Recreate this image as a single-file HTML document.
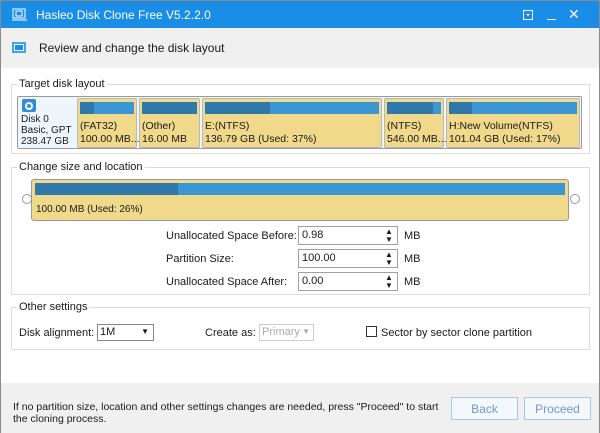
<!DOCTYPE html>
<html><head><style>
*{margin:0;padding:0;box-sizing:border-box}
body{width:600px;height:433px;font-family:"Liberation Sans",sans-serif;font-size:11px;color:#1a1a1a;position:relative;overflow:hidden;background:#fff;border:1px solid #8a8a8a}
.a{position:absolute}
.title{left:0;top:0;width:598px;height:27px;background:#1a8de6;color:#fff;font-size:12px}
.hdr{left:0;top:27px;width:598px;height:40px;background:#f0f0f0}
.ftr{left:0;top:382px;width:598px;height:50px;background:#f0f0f0}
.frame{border:1px solid #dcdcdc}
.leg{background:#fff;padding:0 2px;font-size:11px}
.part{background:#f0d98a;border:1px solid #b8b8b8;border-radius:2px}
.bar{background:#3b97d3}
.bar i{display:block;height:100%;background:#2f78aa}
.inp{border:1px solid #a0a0a0;background:#fff;height:19px;width:100px;padding:0 3px;line-height:17px}
.btn{border:1px solid #a8c8e8;background:#f5f8fb;color:#6a9ccc;text-align:center;font-size:12px;line-height:22px}
</style></head><body>
<div class="a title">
<svg class="a" style="left:11px;top:7px" width="16" height="13"><rect x="1" y="1" width="12" height="9" fill="none" stroke="#fff"/><rect x="4" y="3" width="6" height="5" fill="none" stroke="#fff"/><line x1="0" y1="12" x2="15" y2="12" stroke="#fff"/></svg>
<div class="a" style="left:35px;top:7px">Hasleo Disk Clone Free V5.2.2.0</div>
<svg class="a" style="left:522px;top:9px" width="10" height="10"><rect x="0.5" y="0.5" width="9" height="9" fill="none" stroke="#fff"/><path d="M3 4h4l-2 2z" fill="#fff"/></svg>
<div class="a" style="left:546px;top:18px;width:9px;height:1px;background:#fff"></div>
<div class="a" style="left:567px;top:5px;font-size:14px">✕</div>
</div>
<div class="a hdr">
<div class="a" style="left:11px;top:14px;width:14px;height:11px;border:2px solid #3fa6e6;background:#fff"></div>
<div class="a" style="left:14px;top:17px;width:8px;height:5px;background:#1a8de6"></div>
<div class="a" style="left:38px;top:13px;font-size:12px">Review and change the disk layout</div>
</div>
<div class="a frame" style="left:10px;top:83px;width:579px;height:70px"></div>
<div class="a leg" style="left:16px;top:77px">Target disk layout</div>
<div class="a" style="left:16px;top:95px;width:565px;height:53px;border:1px solid #9a9a9a;border-radius:2px;background:#eef6fd"></div>
<div class="a" style="left:21px;top:98px;width:14px;height:13px;background:#2e8fd6;border-radius:2px"></div>
<div class="a" style="left:24px;top:101px;width:8px;height:8px;border:2px solid #fff;border-radius:50%"></div>
<div class="a" style="left:20px;top:113px;line-height:11px;font-size:10px">Disk 0<br>Basic, GPT<br>238.47 GB</div>
<div class="a part" style="left:76px;top:97px;width:60px;height:50px"></div>
<div class="a bar" style="left:79px;top:101px;width:54px;height:12px"><i style="width:14px"></i></div>
<div class="a" style="left:79px;top:119px;line-height:13px;font-size:10.5px">(FAT32)<br>100.00 MB...</div>
<div class="a part" style="left:138px;top:97px;width:61px;height:50px"></div>
<div class="a bar" style="left:141px;top:101px;width:55px;height:12px"><i style="width:55px"></i></div>
<div class="a" style="left:141px;top:119px;line-height:13px;font-size:10.5px">(Other)<br>16.00 MB</div>
<div class="a part" style="left:201px;top:97px;width:180px;height:50px"></div>
<div class="a bar" style="left:204px;top:101px;width:174px;height:12px"><i style="width:65px"></i></div>
<div class="a" style="left:204px;top:119px;line-height:13px;font-size:10.5px">E:(NTFS)<br>136.79 GB (Used: 37%)</div>
<div class="a part" style="left:383px;top:97px;width:60px;height:50px"></div>
<div class="a bar" style="left:386px;top:101px;width:54px;height:12px"><i style="width:46px"></i></div>
<div class="a" style="left:386px;top:119px;line-height:13px;font-size:10.5px">(NTFS)<br>546.00 MB...</div>
<div class="a part" style="left:445px;top:97px;width:134px;height:50px"></div>
<div class="a bar" style="left:448px;top:101px;width:128px;height:12px"><i style="width:23px"></i></div>
<div class="a" style="left:448px;top:119px;line-height:13px;font-size:10.5px">H:New Volume(NTFS)<br>101.04 GB (Used: 17%)</div>

<div class="a frame" style="left:10px;top:166px;width:579px;height:128px"></div>
<div class="a leg" style="left:16px;top:160px">Change size and location</div>
<div class="a part" style="left:30px;top:178px;width:538px;height:42px;border-color:#999;border-radius:3px"></div>
<div class="a bar" style="left:34px;top:182px;width:530px;height:12px"><i style="width:143px"></i></div>
<div class="a" style="left:35px;top:203px;font-size:10px">100.00 MB (Used: 26%)</div>
<div class="a" style="left:21px;top:193px;width:10px;height:10px;border:1px solid #999;border-radius:50%;background:#fff"></div>
<div class="a" style="left:569px;top:193px;width:10px;height:10px;border:1px solid #999;border-radius:50%;background:#fff"></div>
<div class="a" style="left:165px;top:229px">Unallocated Space Before:</div>
<div class="a" style="left:165px;top:252px">Partition Size:</div>
<div class="a" style="left:165px;top:275px">Unallocated Space After:</div>
<div class="a inp" style="left:297px;top:225px">0.98</div>
<div class="a inp" style="left:297px;top:248px">100.00</div>
<div class="a inp" style="left:297px;top:271px">0.00</div>
<div class="a" style="left:384px;top:227px;font-size:8px;line-height:8px">▲<br>▼</div>
<div class="a" style="left:384px;top:250px;font-size:8px;line-height:8px">▲<br>▼</div>
<div class="a" style="left:384px;top:273px;font-size:8px;line-height:8px">▲<br>▼</div>
<div class="a" style="left:403px;top:229px">MB</div>
<div class="a" style="left:403px;top:252px">MB</div>
<div class="a" style="left:403px;top:275px">MB</div>

<div class="a frame" style="left:10px;top:306px;width:579px;height:43px"></div>
<div class="a leg" style="left:16px;top:300px">Other settings</div>
<div class="a" style="left:18px;top:326px">Disk alignment:</div>
<div class="a" style="left:96px;top:323px;width:57px;height:17px;border:1px solid #888;padding:1px 2px">1M<span style="position:absolute;right:4px;top:2px;font-size:8px">▼</span></div>
<div class="a" style="left:204px;top:326px">Create as:</div>
<div class="a" style="left:258px;top:323px;width:55px;height:17px;border:1px solid #ccc;padding:1px 2px;color:#aaa">Primary<span style="position:absolute;right:3px;top:2px;font-size:8px">▼</span></div>
<div class="a" style="left:365px;top:325px;width:11px;height:11px;border:1px solid #333;background:#fff"></div>
<div class="a" style="left:380px;top:326px">Sector by sector clone partition</div>

<div class="a ftr">
<div class="a" style="left:12px;top:18px;line-height:12px;font-size:10.5px">If no partition size, location and other settings changes are needed, press "Proceed" to start<br>the cloning process.</div>
<div class="a btn" style="left:450px;top:14px;width:67px;height:23px">Back</div>
<div class="a btn" style="left:523px;top:14px;width:67px;height:23px">Proceed</div>
</div>
</body></html>
